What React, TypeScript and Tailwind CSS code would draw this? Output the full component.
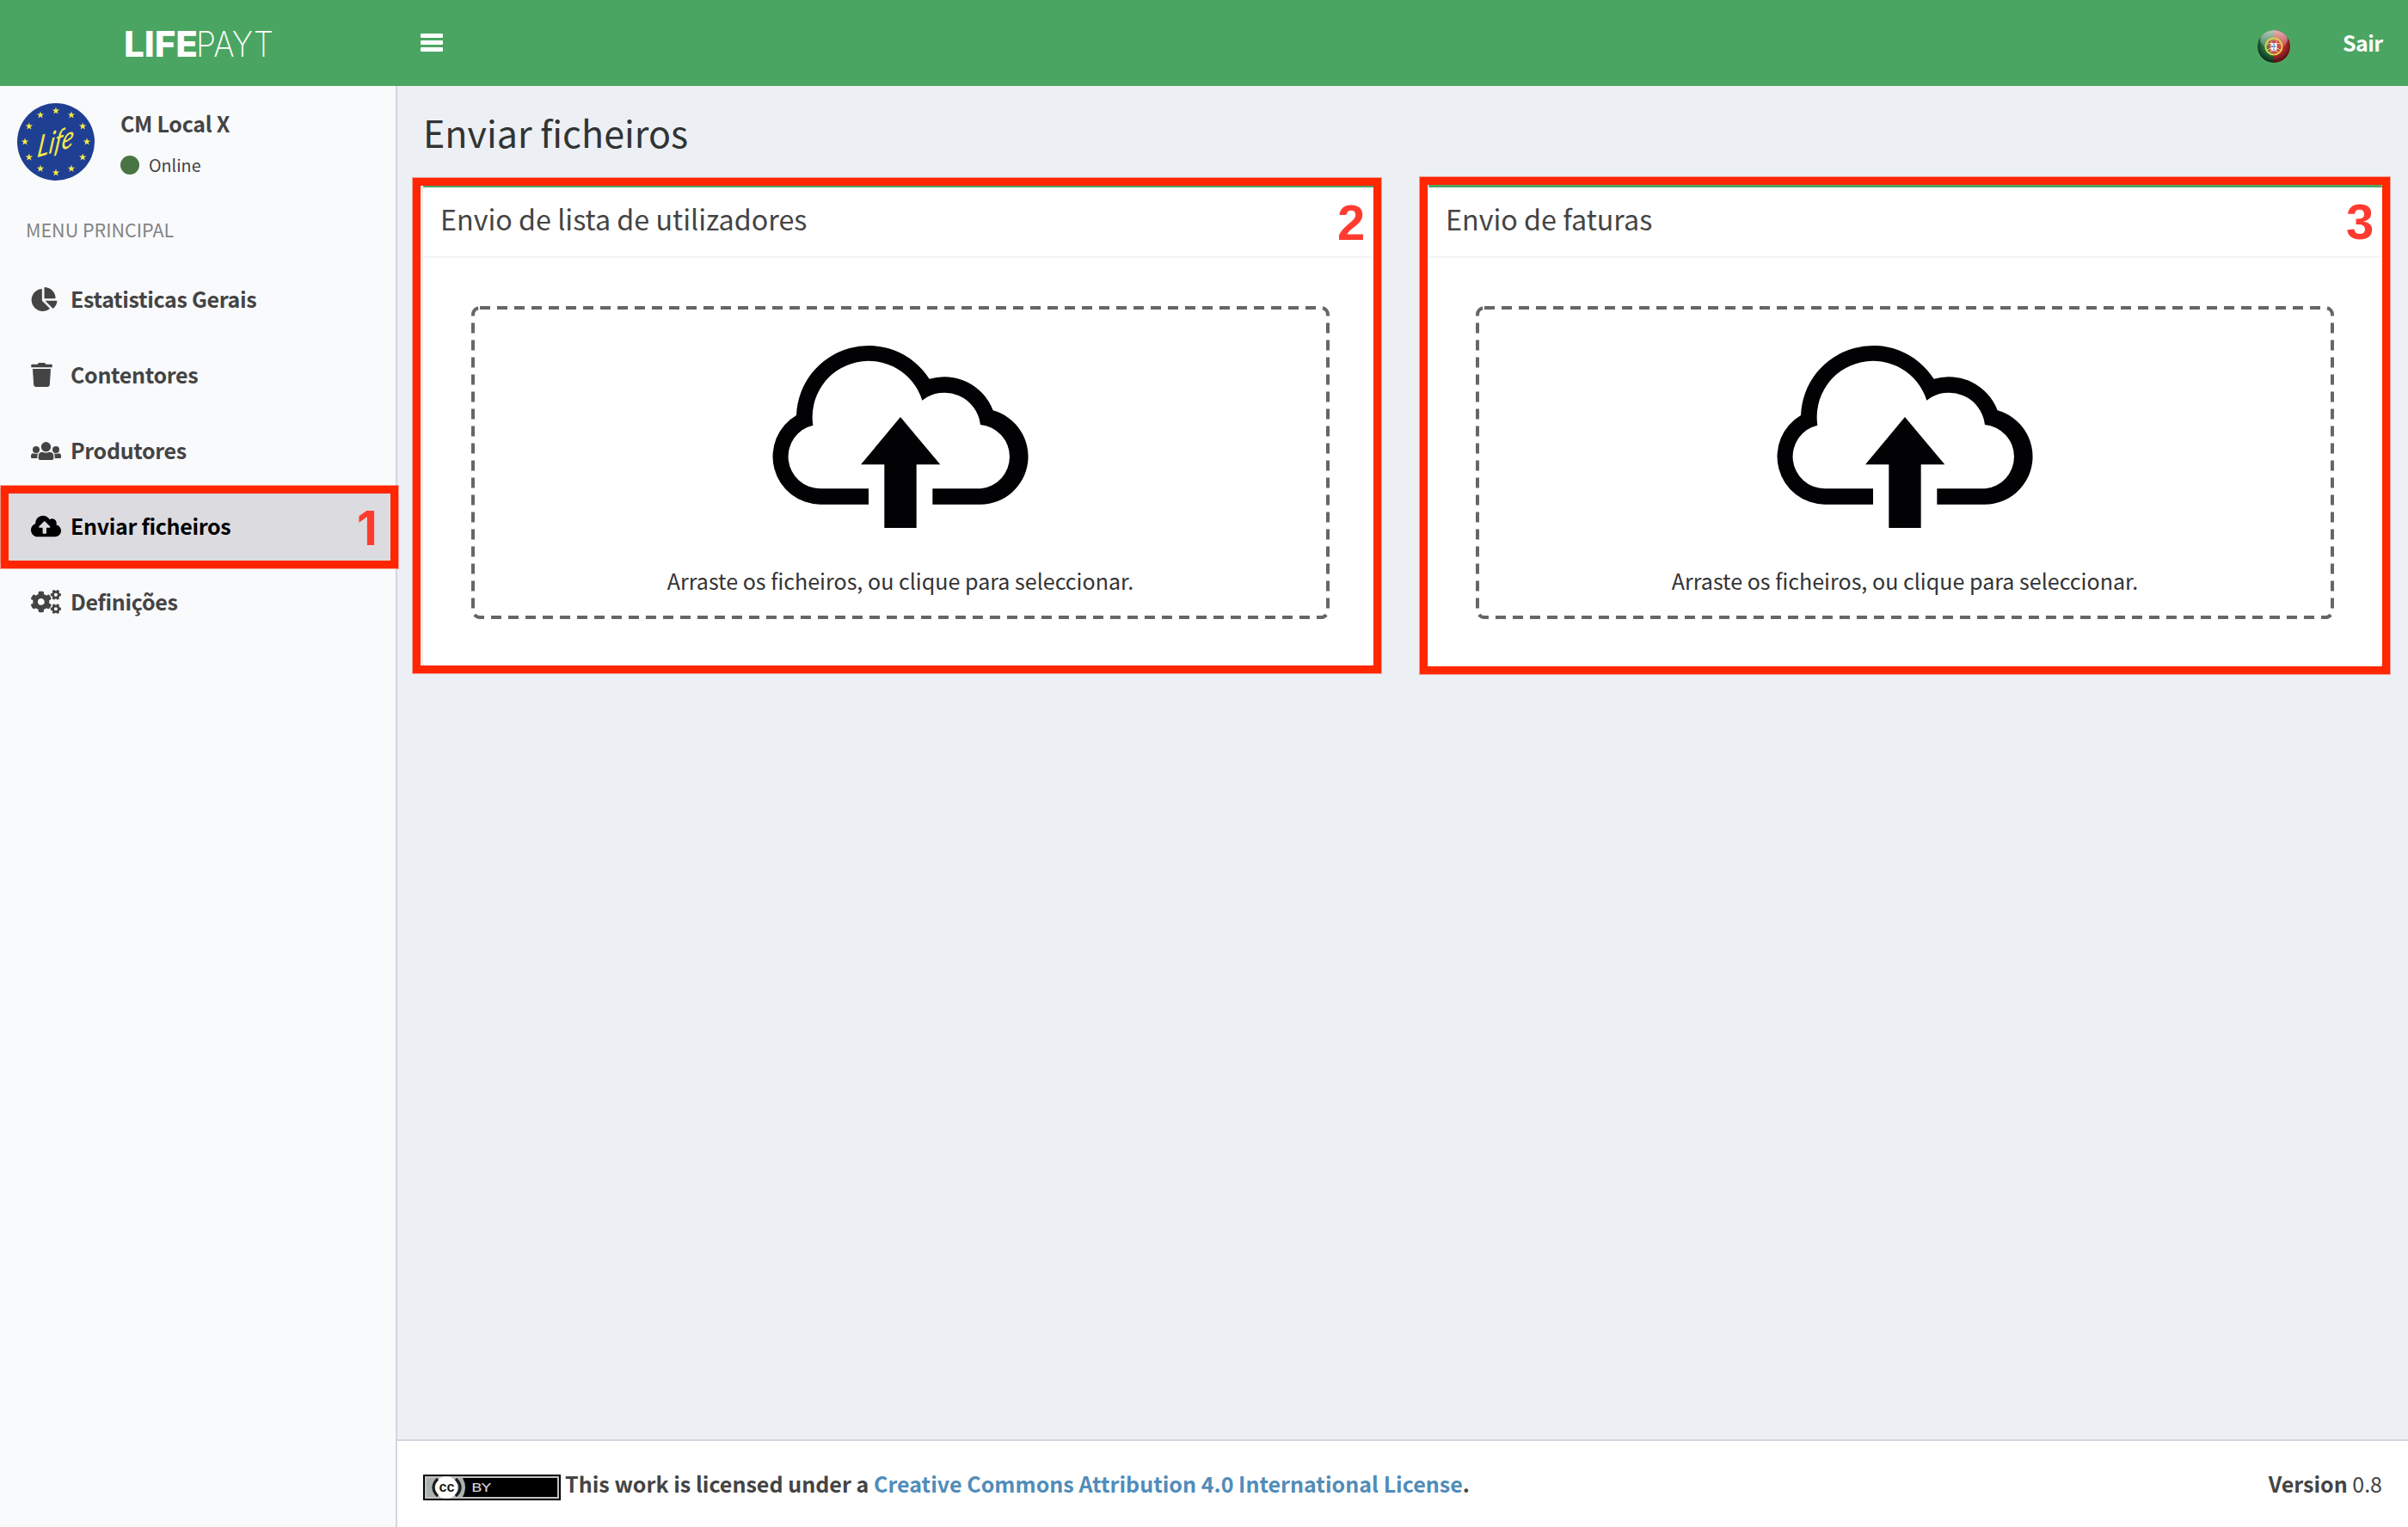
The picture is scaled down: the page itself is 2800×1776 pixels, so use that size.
import React from "react";
import { FaChartPie, FaTrash, FaCloudUploadAlt, FaCogs } from "react-icons/fa";

const CALLOUT =
  "pointer-events-none absolute border-[9px] border-[#ff2600] shadow-[0_0_0_1px_rgba(255,38,0,0.4)]";
const DIGIT = "absolute font-bold leading-[58px] text-[#ff3b30]";

function LifeBadge() {
  const stars = Array.from({ length: 12 }, (_, i) => i * 30);
  return (
    <svg width="90" height="90" viewBox="-45 -45 90 90" className="shrink-0">
      <circle r="45" fill="#1f3f93" />
      {stars.map((a) => {
        const x = 36 * Math.sin((a * Math.PI) / 180);
        const y = -36 * Math.cos((a * Math.PI) / 180);
        return (
          <polygon
            key={a}
            transform={`translate(${x} ${y})`}
            points="0,-4.4 1.1,-1.4 4.2,-1.4 1.7,0.5 2.6,3.6 0,1.8 -2.6,3.6 -1.7,0.5 -4.2,-1.4 -1.1,-1.4"
            fill="#f6e948"
          />
        );
      })}
      <text
        transform="rotate(-17) skewX(-25)"
        x="0"
        y="11"
        textAnchor="middle"
        textLength="44"
        lengthAdjust="spacingAndGlyphs"
        className="font-['Lato',sans-serif] text-[33px] italic"
        fill="#f6e948"
      >
        Life
      </text>
    </svg>
  );
}

function Flag() {
  return (
    <svg width="38" height="38" viewBox="-19 -19 38 38" className="block">
      <defs>
        <clipPath id="ball">
          <circle r="19" />
        </clipPath>
        <radialGradient id="shade" cx="0.5" cy="0.4" r="0.62">
          <stop offset="0.55" stopColor="#000" stopOpacity="0" />
          <stop offset="1" stopColor="#000" stopOpacity="0.7" />
        </radialGradient>
        <linearGradient id="gloss" x1="0" y1="0" x2="0" y2="1">
          <stop offset="0" stopColor="#fff" stopOpacity="0.65" />
          <stop offset="1" stopColor="#fff" stopOpacity="0.1" />
        </linearGradient>
      </defs>
      <g clipPath="url(#ball)">
        <rect x="-19" y="-19" width="19" height="38" fill="#23703f" />
        <rect x="0" y="-19" width="19" height="38" fill="#bb2a2e" />
        <circle r="19" fill="url(#shade)" />
        <ellipse cx="0" cy="-8" rx="16" ry="11" fill="url(#gloss)" />
        <circle r="9.6" fill="none" stroke="#ddd04a" strokeWidth="2" />
        <path d="M-9 -3H9M-9 3.5H9M-5 -8L6 8M5 -8L-6 8" stroke="#ddd04a" strokeWidth="1.2" fill="none" />
        <path d="M-6 -6.5H6V1.5Q6 7 0 8.5Q-6 7 -6 1.5Z" fill="#d2484a" />
        <path d="M-6 -3.5H6M-6 2.5H6M-3 -6V7M3 -6V7" stroke="#e9c9a0" strokeWidth="0.9" />
        <path d="M-3.4 -4H3.4V2Q3.4 5 0 5.6Q-3.4 5 -3.4 2Z" fill="#f2f5fa" />
        <path d="M0 -3.5V5M-3 0H3" stroke="#6f95cc" strokeWidth="1.8" strokeDasharray="2 1" />
      </g>
    </svg>
  );
}

function UsersIcon({ className }: { className?: string }) {
  return (
    <svg viewBox="0 0 105 63" className={className} fill="currentColor">
      <circle cx="52.5" cy="17" r="17" />
      <circle cx="18" cy="27" r="12" />
      <circle cx="87" cy="27" r="12" />
      <path d="M26 57V50Q26 35 41 35Q52 40 64 35Q79 35 79 50V57Q79 63 73 63H32Q26 63 26 57Z" />
      <path d="M0 53V49Q0 40 9 40Q17 43 25 40Q22 45 22 50V57H4Q0 57 0 53Z" />
      <path d="M105 53V49Q105 40 96 40Q88 43 80 40Q83 45 83 50V57H101Q105 57 105 53Z" />
    </svg>
  );
}

function UploadCloud() {
  return (
    <svg width="298" height="213.33" viewBox="174 123 894 640" className="block" fill="#020103">
      <path d="M510 680H341A167 167 0 0 1 258 369A252 252 0 0 1 722 242A182 182 0 0 1 944 352A167 167 0 0 1 901 680H733V625H901A112 112 0 0 0 900 402A126 126 0 0 0 697 317A196 196 0 0 0 316 404A112 112 0 0 0 341 625H510Z" />
      <path d="M621 375L760 541H677V763H565V541H483Z" />
    </svg>
  );
}

function CcBadge() {
  return (
    <svg width="160" height="30" viewBox="0 0 160 30" className="mt-[7px] block shrink-0">
      <rect width="160" height="30" fill="#000" />
      <rect x="3" y="3" width="154" height="24" fill="#000" stroke="#c3c3c3" strokeWidth="2" />
      <path d="M4 4H46Q52 15 46 26H4Z" fill="#aab2ab" />
      <circle cx="27" cy="15" r="13" fill="#fff" />
      <path d="M17 5Q7 15 17 25M38 5Q48 15 38 25" fill="none" stroke="#1c1c1c" strokeWidth="3.2" />
      <text
        x="27.5"
        y="20"
        textAnchor="middle"
        className="font-['Liberation_Sans',sans-serif] text-[17px] font-bold"
        textLength="18"
        lengthAdjust="spacingAndGlyphs"
        fill="#1c1c1c"
      >
        cc
      </text>
      <text
        x="56"
        y="20"
        className="font-['DejaVu_Sans',sans-serif] text-[14px]"
        textLength="23"
        lengthAdjust="spacingAndGlyphs"
        fill="#d8d8d8"
      >
        BY
      </text>
    </svg>
  );
}

const menu = [
  { label: "Estatisticas Gerais", Icon: FaChartPie, size: "h-7 w-[31px]" },
  { label: "Contentores", Icon: FaTrash, size: "h-7 w-[25px]" },
  { label: "Produtores", Icon: UsersIcon, size: "h-[21px] w-[35px]" },
  { label: "Enviar ficheiros", Icon: FaCloudUploadAlt, size: "h-7 w-[35px]", active: true },
  { label: "Definições", Icon: FaCogs, size: "h-7 w-[35px]" },
];

function UploadBox({ title, inset }: { title: string; inset: string }) {
  return (
    <section className="h-[564px] rounded-[6px] border-t-[6px] border-[#4ba562] bg-white shadow-[0_2px_2px_rgba(0,0,0,0.1)]">
      <h3 className="h-[82px] border-b-2 border-[#f4f4f4] px-5 pt-[16px] text-[32.25px] leading-[40px]">{title}</h3>
      <div className={"pt-14 " + inset}>
        <div className="relative flex h-[364px] w-[998px] flex-col items-center pt-[45px] text-[#333]">
          <svg width="998" height="364" className="absolute inset-0" fill="none">
            <rect x="2" y="2" width="994" height="360" rx="8" stroke="#666" strokeWidth="4" strokeDasharray="12 8" />
          </svg>
          <UploadCloud />
          <p className="mt-[41px] text-[25.07px] leading-[40px]">Arraste os ficheiros, ou clique para seleccionar.</p>
        </div>
      </div>
    </section>
  );
}

export default function App() {
  return (
    <div className="relative flex h-[1776px] w-[2800px] flex-col overflow-hidden bg-[#ecf0f5] font-['Noto_Sans_CJK_SC','Noto_Sans_CJK_JP',sans-serif] text-[25px] leading-[40px] text-[#444]">
      <header className="flex h-[100px] shrink-0 items-center bg-[#4ba562] text-white">
        <div className="w-[460px] pl-[137px]">
          <svg width="200" height="60" viewBox="-10 -14 200 60" fill="#fff" className="mt-[4px] block overflow-visible">
            <text x="-3" y="30" textLength="86" lengthAdjust="spacingAndGlyphs" className="font-['Inter',sans-serif] text-[41px] font-extrabold">
              LIFE
            </text>
            <text x="81" y="30" textLength="90" lengthAdjust="spacingAndGlyphs" className="font-['Inter',sans-serif] text-[41px] font-extralight">
              PAYT
            </text>
          </svg>
        </div>
        <svg width="26" height="21" viewBox="0 0 26 21" fill="#fff" className="-mt-px ml-[29px]">
          <rect width="26" height="5" rx="1" />
          <rect y="8" width="26" height="5" rx="1" />
          <rect y="16" width="26" height="5" rx="1" />
        </svg>
        <div className="mr-[30px] ml-auto flex items-center gap-[61px]">
          <div className="pt-2">
            <Flag />
          </div>
          <span className="-mt-[2px] w-[46px] font-semibold tracking-[-0.6px]">Sair</span>
        </div>
      </header>

      <div className="flex min-h-0 flex-1">
        <aside className="w-[462px] shrink-0 border-r-2 border-[#d2d6de] bg-[#f9fafc]">
          <div className="flex h-[130px] pt-5 pl-5">
            <LifeBadge />
            <div className="pl-[30px]">
              <p className="mt-[3px] font-semibold tracking-[-0.3px]">CM Local X</p>
              <p className="mt-[9px] flex items-center text-[19.7px]">
                <span className="mr-[11px] h-[22px] w-[22px] rounded-full bg-[#497443]" />
                Online
              </p>
            </div>
          </div>
          <p className="h-[74px] pt-[17px] pl-[30px] text-[21.5px] text-[#848484]">MENU PRINCIPAL</p>
          <nav>
            {menu.map(({ label, Icon, size, active }) => (
              <a
                key={label}
                className={
                  "flex h-[88px] items-center pl-9 font-semibold tracking-[-0.33px] " +
                  (active ? "bg-[#dcdbe0] text-black" : "")
                }
              >
                <span className="w-[46px]">
                  <Icon className={size} />
                </span>
                <span className="-mt-[2px]">{label}</span>
              </a>
            ))}
          </nav>
        </aside>

        <div className="flex min-w-0 flex-1 flex-col">
          <main className="flex-1 px-[30px]">
            <h1 className="h-[112px] pt-[23px] text-[43px] leading-[60px] text-[#333]">Enviar ficheiros</h1>
            <div className="grid grid-cols-2 gap-[60px]">
              <UploadBox title="Envio de lista de utilizadores" inset="pl-[56px]" />
              <UploadBox title="Envio de faturas" inset="pl-[55px]" />
            </div>
          </main>
          <footer className="flex h-[102px] shrink-0 items-center border-t-2 border-[#d2d6de] bg-white px-[30px]">
            <CcBadge />
            <p className="-mt-[2px] ml-[5px] text-[25.06px] font-bold">
              This work is licensed under a <a className="text-[#518cb9]">Creative Commons Attribution 4.0 International License</a>.
            </p>
            <p className="-mt-[2px] ml-auto">
              <b>Version</b> 0.8
            </p>
          </footer>
        </div>
      </div>

      <div className={CALLOUT + " top-[565px] left-[1px] h-[96px] w-[462px]"} />
      <div className={CALLOUT + " top-[207px] left-[480px] h-[576px] w-[1126px]"} />
      <div className={CALLOUT + " top-[206px] left-[1651px] h-[578px] w-[1128px]"} />
      <span className={DIGIT + " top-[585px] left-[415px] font-['Inter',sans-serif] text-[55px]"}>1</span>
      <span className={DIGIT + " top-[230px] left-[1555px] font-['Liberation_Sans',sans-serif] text-[58px]"}>2</span>
      <span className={DIGIT + " top-[229px] left-[2728px] font-['Liberation_Sans',sans-serif] text-[58px]"}>3</span>
    </div>
  );
}
